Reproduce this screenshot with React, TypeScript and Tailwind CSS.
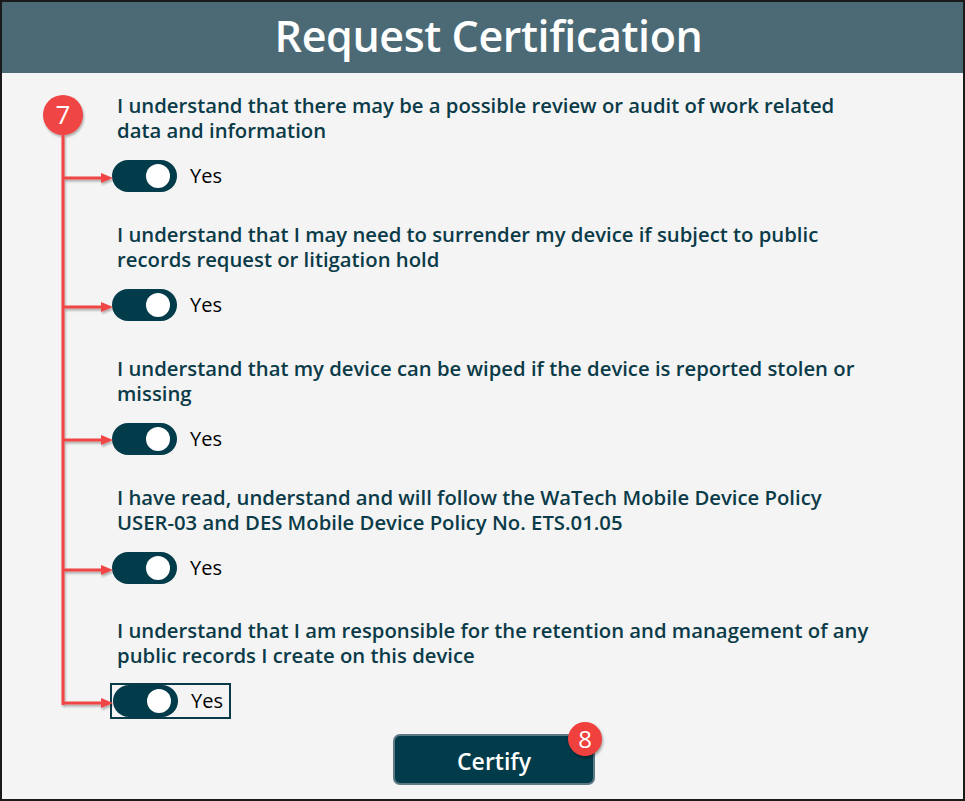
import React, { useState } from 'react';

const questions = [
  ['I understand that there may be a possible review or audit of work related', 'data and information'],
  ['I understand that I may need to surrender my device if subject to public', 'records request or litigation hold'],
  ['I understand that my device can be wiped if the device is reported stolen or', 'missing'],
  ['I have read, understand and will follow the WaTech Mobile Device Policy', 'USER-03 and DES Mobile Device Policy No. ETS.01.05'],
  ['I understand that I am responsible for the retention and management of any', 'public records I create on this device'],
];

// space under each block, tuned to the screenshot
const spacers = ['h-[30px]', 'h-[35px]', 'h-[30px]', 'h-[34px]'];

// y centers of the toggles, used by the callout overlay
const arrowYs = [176, 305, 438, 568, 701];

function Toggle({ on, onClick }: { on: boolean; onClick: () => void }) {
  return (
    <button
      onClick={onClick}
      className={`w-[65px] h-[32px] rounded-full flex items-center px-[7px] ${on ? 'bg-[#023b4a] justify-end' : 'bg-[#9aa7ac] justify-start'}`}
    >
      <span className="w-[24px] h-[24px] rounded-full bg-white block" />
    </button>
  );
}

export default function App() {
  const [vals, setVals] = useState([true, true, true, true, true]);

  return (
    <div className="relative w-[965px] h-[801px] border-2 border-[#1a1a1a] bg-[#f4f4f4] flex flex-col overflow-hidden" style={{ fontFamily: '"Open Sans", "Noto Sans", sans-serif' }}>
      <div className="h-[71px] shrink-0 bg-[#4b6a75] flex items-center justify-center pl-[12px]">
        <h1 className="text-white text-[43px] font-semibold tracking-[-0.4px] leading-none pb-[4px]">Request Certification</h1>
      </div>

      <div className="flex flex-col pl-[115px] pt-[20px]">
        {questions.map((q, i) => (
          <div key={i} className="flex flex-col">
            <div className="text-[#0b3b48] text-[20.3px] font-semibold whitespace-nowrap">
              <p className="h-[25px] leading-[25px]">{q[0]}</p>
              <p className="h-[25px] leading-[25px]">{q[1]}</p>
            </div>
            <div className={`flex items-center gap-[13px] self-start ${i === 4 ? 'border-2 border-[#0b3b48] mt-[15px] -ml-[7px] pl-[1px] pr-[6px]' : 'mt-[17px] -ml-[5px]'}`}>
              <Toggle on={vals[i]} onClick={() => setVals(vals.map((v, j) => (j === i ? !v : v)))} />
              <span className="text-black text-[20px] leading-none">{vals[i] ? 'Yes' : 'No'}</span>
            </div>
            {i < 4 && <div className={spacers[i]} />}
          </div>
        ))}

        <div className="flex mt-[15px] pl-[276px]">
          <div className="relative">
            <button className="w-[202px] h-[51px] rounded-[7px] bg-[#023b4a] border-2 border-[#5d7a84] text-white text-[23px] font-semibold pt-[4px]">
              Certify
            </button>
            <span className="absolute -top-[12px] -right-[7px] w-[34px] h-[34px] rounded-full bg-[#f0413f] text-white text-[24px] flex items-center justify-center shadow-[1px_2px_3px_rgba(0,0,0,0.35)]">8</span>
          </div>
        </div>
      </div>

      {/* callout 7 */}
      <svg className="absolute left-0 top-0 pointer-events-none" width="965" height="801">
        <defs>
          <filter id="sh" x="-20%" y="-20%" width="140%" height="140%">
            <feDropShadow dx="1" dy="2" stdDeviation="1.2" floodColor="#000" floodOpacity="0.3" />
          </filter>
        </defs>
        <g filter="url(#sh)">
          <line x1="61" y1="120" x2="61" y2="703" stroke="#f04545" strokeWidth="3" />
          {arrowYs.map((y) => (
            <g key={y}>
              <line x1="61" y1={y} x2="102" y2={y} stroke="#f04545" strokeWidth="3" />
              <polygon points={`99,${y - 5} 111,${y} 99,${y + 5}`} fill="#f04545" />
            </g>
          ))}
          <circle cx="61" cy="113" r="20" fill="#f04444" />
        </g>
        <text x="61" y="122" textAnchor="middle" fill="#fff" fontSize="26" fontFamily="Open Sans, sans-serif">7</text>
      </svg>
    </div>
  );
}
